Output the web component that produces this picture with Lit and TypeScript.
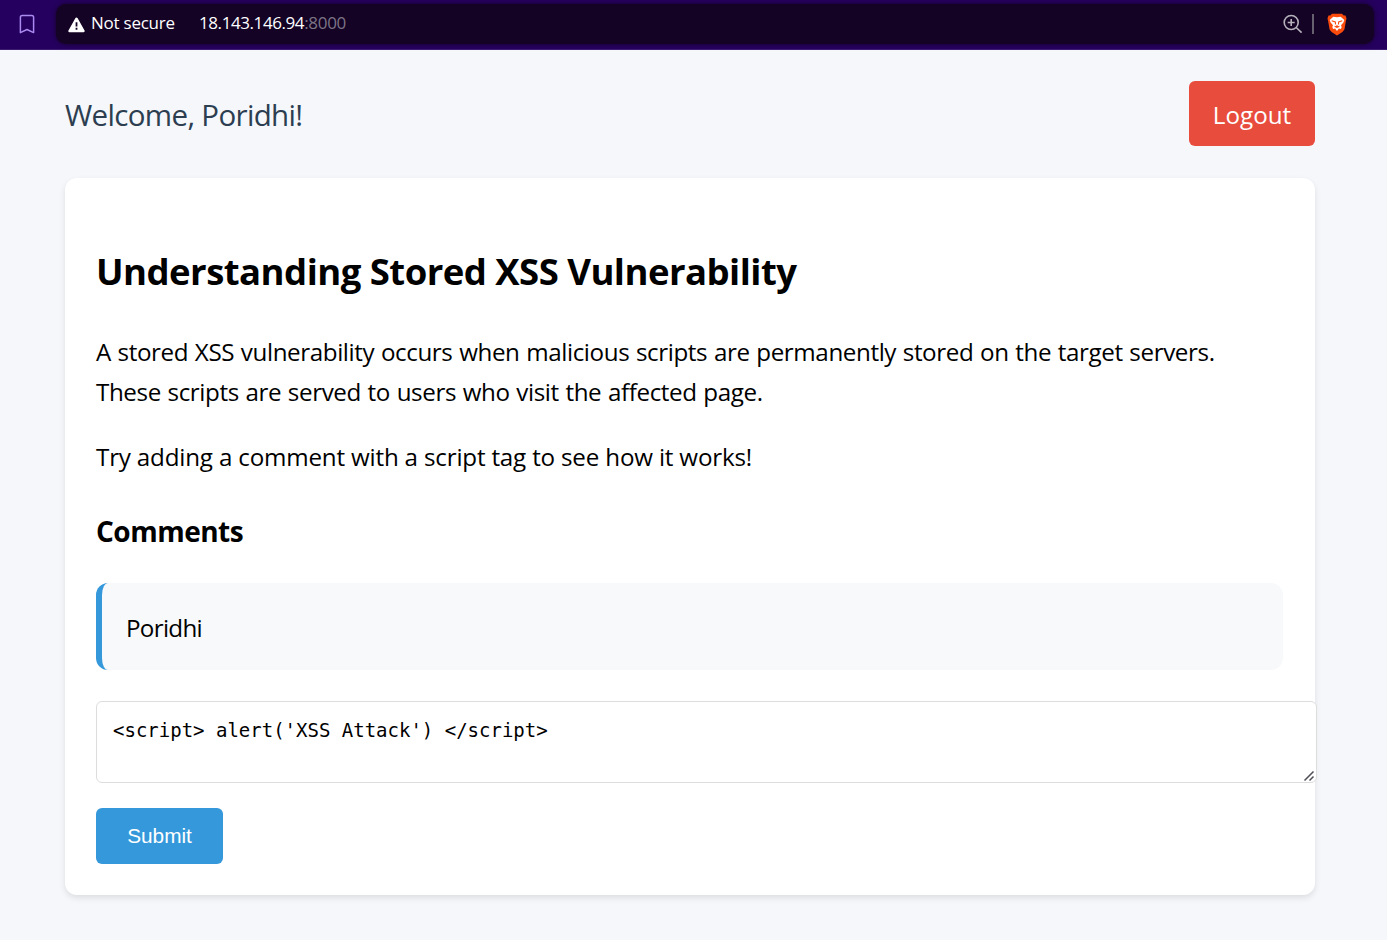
import { LitElement, html, css } from "lit";
import { customElement } from "lit/decorators.js";

@customElement("app-root")
export class AppRoot extends LitElement {
  static styles = css`
    :host { display: block; height: 940px; overflow: hidden; background: #f5f7fb; color: #000; font: 24.2px/40px "Open Sans", "Noto Sans", sans-serif; }
    * { box-sizing: border-box; }
    .bar { height: 50px; background: #25005e; border-bottom: 1px solid #3c1c70; display: flex; align-items: flex-start; padding: 4px 13px 0 18px; }
    .bookmark { margin: 10px 20px 0 0; flex: none; }
    .address { flex: 1; height: 40px; border-radius: 10px; background: #140325; box-shadow: 0 0 4px #140325; display: flex; align-items: center; padding: 0 27px 0 12px; font-size: 17px; line-height: 38px; color: #fff; }
    .warn { margin: 2px 6px 0 0; }
    .secure, .host, .port { padding-bottom: 2px; }
    .secure { width: 108px; letter-spacing: -0.24px; }
    .host { letter-spacing: -0.42px; }
    .port { color: #7c7585; letter-spacing: -0.3px; }
    .spacer { flex: 1; }
    .divider { width: 2px; height: 20px; background: #66606f; margin: 0 13px 0 9px; }
    .page { padding: 31px 72px 0 65px; }
    .top { display: flex; justify-content: space-between; align-items: flex-start; height: 97px; }
    .welcome { font-size: 29.5px; color: #2c3e50; line-height: 68px; white-space: nowrap; letter-spacing: -0.66px; }
    .logout { width: 126px; height: 65px; border-radius: 6px; background: #e84c3d; color: #fff; text-align: center; line-height: 67px; }
    .card { height: 717px; border-radius: 12px; background: #fff; box-shadow: 0 3px 6px rgba(0, 0, 0, 0.1); padding: 65px 32px 0 31px; white-space: nowrap; }
    h2, h3, p { margin: 0; }
    h2 { font-size: 36.5px; line-height: 56px; margin-bottom: 33px; letter-spacing: -0.53px; }
    h3 { font-size: 28px; line-height: 44px; margin: 32px 0 30px; letter-spacing: -0.5px; }
    .intro { letter-spacing: -0.4px; word-spacing: 0.8px; }
    .second { margin-top: 25px; letter-spacing: -0.19px; }
    .comment { height: 87px; border-left: 6px solid #3598db; border-radius: 12px; background: #f8f9fb; padding-left: 24px; line-height: 90px; letter-spacing: -0.7px; }
    .field { position: relative; width: 1221px; height: 82px; margin: 31px 0 25px; }
    .grip { position: absolute; right: 2px; bottom: 1px; }
    textarea { display: block; width: 100%; height: 100%; margin: 0; border: 1px solid #ddd; border-radius: 6px; padding: 16px; background: #fff; color: #000; font: 19px/25px "DejaVu Sans Mono", monospace; resize: none; outline: none; overflow: hidden; }
    button { display: block; width: 127px; height: 56px; border: 0; border-radius: 6px; background: #3598db; color: #fff; font: 20.8px "Liberation Sans", Arial, sans-serif; padding: 0; }
  `;

  render() {
    return html`
      <header class="bar">
        <svg class="bookmark" width="18" height="21" viewBox="0 0 18 21" fill="none" stroke="#a98af0" stroke-width="1.5" stroke-linejoin="round"><path d="M4.2 1.5h9.600a1.800 1.800 0 0 1 1.800 1.800v15.300L9 15.500l-6.600 3.100V3.300a1.800 1.800 0 0 1 1.800-1.800Z" /></svg>
        <div class="address">
          <svg class="warn" width="17" height="16" viewBox="0 0 17 16"><path d="M8.500 1.700 15.500 14H1.500Z" fill="#fff" stroke="#fff" stroke-width="2.400" stroke-linejoin="round" /><path d="M8.500 5.200v4.200M8.500 10.700v2" stroke="#140325" stroke-width="1.800" /></svg>
          <span class="secure">Not secure</span><span class="host">18.143.146.94</span><span class="port">:8000</span>
          <span class="spacer"></span>
          <svg width="20" height="20" viewBox="0 0 20 20" fill="none" stroke="#b6b2bc" stroke-width="1.600"><circle cx="8.200" cy="8.500" r="7" /><path d="M8.200 5v7M4.700 8.500h7M13.200 13.500l5.400 5.200" /></svg>
          <span class="divider"></span>
          <svg width="20" height="23" viewBox="0 0 20 23">
            <path d="M5 .7h10l1.700 1.800 1.800 0 1 3-.6 2.600-1.500 8.400-2 2.600L10 22.500l-5.400-3.400-2-2.600L1.100 8.100.500 5.500l1-3h1.800Z" fill="#fb4b0c" />
            <path d="m6.300 3.700 3.700.6 3.700-.6 3.600 3.200-.9 2.600-2.400 2.800.7 1.700-.8 2-2-.5L10 17.900l-1.900-2.400-2 .5-.8-2 .7-1.700-2.400-2.800-.9-2.600Z" fill="#fff" />
            <path d="M4.700 7.800 8.300 9l.3 2.500M15.300 7.800 11.700 9l-.3 2.500M7.600 13.300l2.400 1 2.400-1M10 12v2.300" fill="none" stroke="#fb4b0c" stroke-width="1.100" />
          </svg>
        </div>
      </header>
      <main class="page">
        <div class="top"><div class="welcome">Welcome, Poridhi!</div><div class="logout">Logout</div></div>
        <section class="card">
          <h2>Understanding Stored XSS Vulnerability</h2>
          <p class="intro">A stored XSS vulnerability occurs when malicious scripts are permanently stored on the target servers.<br />These scripts are served to users who visit the affected page.</p>
          <p class="second">Try adding a comment with a script tag to see how it works!</p>
          <h3>Comments</h3>
          <div class="comment">Poridhi</div>
          <div class="field">
            <textarea spellcheck="false" .value=${"<script> alert('XSS Attack') </" + "script>"}></textarea>
            <svg class="grip" width="12" height="12" viewBox="0 0 12 12" fill="none" stroke="#4d4d55" stroke-width="1.500"><path d="M1.500 10.500 10.500 1.500M6.500 10.500l4-4" /></svg>
          </div>
          <button>Submit</button>
        </section>
      </main>
    `;
  }
}
